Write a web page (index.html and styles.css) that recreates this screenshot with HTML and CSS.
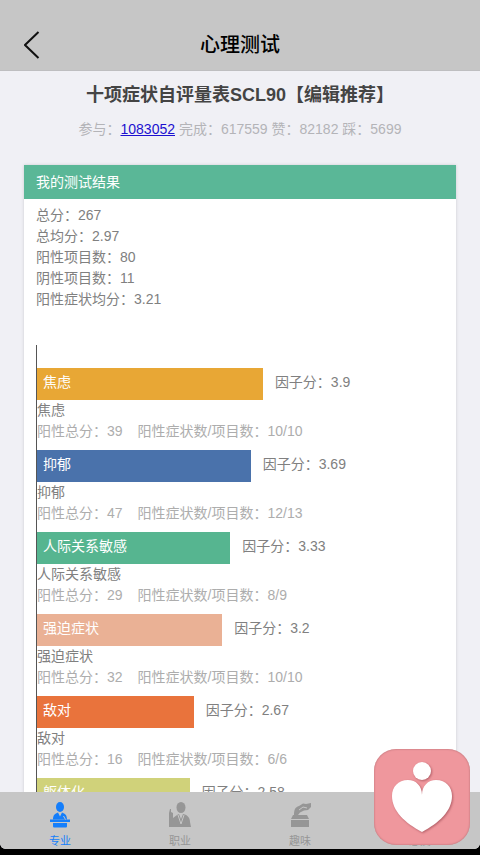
FILE: index.html
```
<!DOCTYPE html>
<html lang="zh-CN">
<head>
  <meta charset="UTF-8" />
  <meta name="viewport" content="width=device-width, initial-scale=1.0" />
  <title>心理测试</title>
  <link rel="stylesheet" href="styles.css">
</head>
<body>
  <div class="app">
    <header class="topbar">
      <button class="back" type="button" aria-label="返回">
        <svg width="16" height="28" viewBox="0 0 16 28" fill="none" stroke="#111" stroke-width="2"><path d="M14.500 1L1 14L14.500 27"/></svg>
      </button>
      <h1>心理测试</h1>
    </header>

    <main class="content">
      <h2>十项症状自评量表SCL90【编辑推荐】</h2>
      <p class="stats">参与：<a href="#">1083052</a> 完成：617559 赞：82182 踩：5699</p>

      <section class="card">
        <h3>我的测试结果</h3>
        <ul class="summary">
          <li>总分：267</li>
          <li>总均分：2.97</li>
          <li>阳性项目数：80</li>
          <li>阴性项目数：11</li>
          <li>阳性症状均分：3.21</li>
        </ul>

        <div class="chart">
          <div class="factor">
            <div class="row"><div class="bar orange" style="width: 55.5%">焦虑</div><span>因子分：3.9</span></div>
            <p>焦虑</p>
            <p class="detail"><span>阳性总分：39</span><span>阳性症状数/项目数：10/10</span></p>
          </div>
          <div class="factor">
            <div class="row"><div class="bar blue" style="width: 52.5%">抑郁</div><span>因子分：3.69</span></div>
            <p>抑郁</p>
            <p class="detail"><span>阳性总分：47</span><span>阳性症状数/项目数：12/13</span></p>
          </div>
          <div class="factor">
            <div class="row"><div class="bar green" style="width: 47.5%">人际关系敏感</div><span>因子分：3.33</span></div>
            <p>人际关系敏感</p>
            <p class="detail"><span>阳性总分：29</span><span>阳性症状数/项目数：8/9</span></p>
          </div>
          <div class="factor">
            <div class="row"><div class="bar peach" style="width: 45.5%">强迫症状</div><span>因子分：3.2</span></div>
            <p>强迫症状</p>
            <p class="detail"><span>阳性总分：32</span><span>阳性症状数/项目数：10/10</span></p>
          </div>
          <div class="factor">
            <div class="row"><div class="bar red" style="width: 38.5%">敌对</div><span>因子分：2.67</span></div>
            <p>敌对</p>
            <p class="detail"><span>阳性总分：16</span><span>阳性症状数/项目数：6/6</span></p>
          </div>
          <div class="factor">
            <div class="row"><div class="bar lime" style="width: 37.5%">躯体化</div><span>因子分：2.58</span></div>
          </div>
        </div>
      </section>
    </main>

    <nav class="tabs">
      <a class="active" href="#">
        <svg width="24" height="26" viewBox="0 0 24 26" fill="currentColor"><ellipse cx="12" cy="5" rx="4" ry="5"/><path d="M5 17.500c0-4.500 2-6 5-7l2 4 2-4c3 1 5 2.500 5 7z"/><path d="M2 17.500h20V20H2zM5 21h14v3c0 1-.5 1.500-1.500 1.500h-11C5.500 25.500 5 25 5 24z"/><path d="M15.500 14l2 3.500" stroke="#c6c6c6" stroke-width="1"/></svg>
        <span>专业</span>
      </a>
      <a href="#">
        <svg width="24" height="26" viewBox="0 0 24 26" fill="currentColor"><ellipse cx="13" cy="5.500" rx="4.500" ry="5.500"/><path d="M1 25V11l1-4h1v3l2 1v5l4-3 2-1 2 5 2-5c5 1 7 4 7 8l1 5z"/><path d="M10 13l3 9 3-9" fill="none" stroke="#c6c6c6" stroke-width="1"/></svg>
        <span>职业</span>
      </a>
      <a href="#">
        <svg width="24" height="26" viewBox="0 0 24 26" fill="currentColor"><path d="M6 13c0-5 1-8 5-9l4-2.500 3 .5 5-1v4l-3 3-4 .5-4 2-2 2.500z"/><path d="M11 8l4-3 4 1" fill="none" stroke="#c6c6c6" stroke-width="1"/><path d="M5 13h14l2 4H3zM3 18h18v7H3z"/></svg>
        <span>趣味</span>
      </a>
      <a href="#">
        <svg width="24" height="26" viewBox="0 0 24 26" fill="currentColor"><circle cx="12" cy="6" r="5"/><path d="M3 25c0-8 3-12 9-12s9 4 9 12z"/></svg>
        <span>恋爱</span>
      </a>
    </nav>
  </div>

  <button class="heart" type="button" aria-label="心理助手">
    <svg width="96" height="96" viewBox="0 0 96 96" fill="#fff">
      <circle cx="48" cy="22" r="9"/>
      <path d="M48 46C48 37 42 31 34 31C24 31 18 38 18 47C18 62 31 74 48 83C65 74 78 62 78 47C78 38 72 31 62 31C54 31 48 37 48 46Z"/>
    </svg>
  </button>
</body>
</html>
```
FILE: styles.css
```
* {
  box-sizing: border-box;
  margin: 0;
  padding: 0;
}
body {
  font-family: "Liberation Sans", "Noto Sans CJK SC", sans-serif;
  font-size: 14px;
  line-height: 21px;
  color: #808080;
  background: #000;
}
.app {
  display: flex;
  flex-direction: column;
  height: calc(100vh - 6px);
  background: #f0f0f5;
  border-radius: 0 0 6px 6px;
  overflow: hidden;
}
.topbar {
  flex: none;
  display: grid;
  grid-template-columns: 64px 1fr 64px;
  align-items: center;
  padding: 21px 0 1px;
  background: #c6c6c6;
  border-bottom: 1px solid #bebec0;
}
.topbar h1 {
  font-size: 20px;
  line-height: 48px;
  font-weight: 500;
  text-align: center;
  color: #000;
}
.back {
  height: 48px;
  padding-left: 24px;
  border: none;
  background: none;
  text-align: left;
  cursor: pointer;
}
.back svg {
  display: block;
}
.content {
  flex: 1;
  min-height: 0;
  overflow: hidden;
  padding: 10px 24px 0;
}
h2 {
  font-size: 18px;
  line-height: 28px;
  text-align: center;
  white-space: nowrap;
  color: #444;
}
.stats {
  margin-top: 10px;
  text-align: center;
  color: #b4b4b8;
}
.stats a {
  color: #1c10d0;
}
.card {
  margin-top: 25px;
  background: #fff;
  box-shadow: 0 0 3px rgba(0, 0, 0, 0.15);
}
h3 {
  padding: 0 12px;
  font-size: 14px;
  line-height: 34px;
  font-weight: 400;
  color: #fff;
  background: #5ab797;
}
.summary {
  padding: 6px 12px 0;
  list-style: none;
}
.chart {
  margin: 35px 12px 0;
  padding-top: 23px;
  border-left: 1px solid #555;
}
.factor {
  margin-bottom: 8px;
}
.row {
  display: flex;
  gap: 12px;
  line-height: 28px;
}
.bar {
  height: 32px;
  padding-left: 6px;
  color: #fff;
}
.orange { background: #e8a735; }
.blue { background: #4a72ab; }
.green { background: #56b590; }
.peach { background: #eab195; }
.red { background: #e9733c; }
.lime { background: #d0d27a; }
.detail {
  display: flex;
  gap: 15px;
  color: #adadad;
}
.tabs {
  flex: none;
  display: grid;
  grid-template-columns: repeat(4, 1fr);
  background: #c6c6c6;
}
.tabs a {
  display: flex;
  flex-direction: column;
  align-items: center;
  gap: 6px;
  padding: 10px 0 1px;
  font-size: 11px;
  line-height: 14px;
  color: #969696;
  text-decoration: none;
}
.tabs .active {
  color: #147efb;
}
.heart {
  position: fixed;
  right: 10px;
  bottom: 10px;
  width: 96px;
  height: 96px;
  border: none;
  border-radius: 22px;
  background: #ef979d;
  box-shadow: inset 0 0 2px #a8656a;
  cursor: pointer;
}
.heart svg {
  display: block;
  filter: drop-shadow(1px 1px 1px rgba(140, 60, 70, 0.6));
}
```
